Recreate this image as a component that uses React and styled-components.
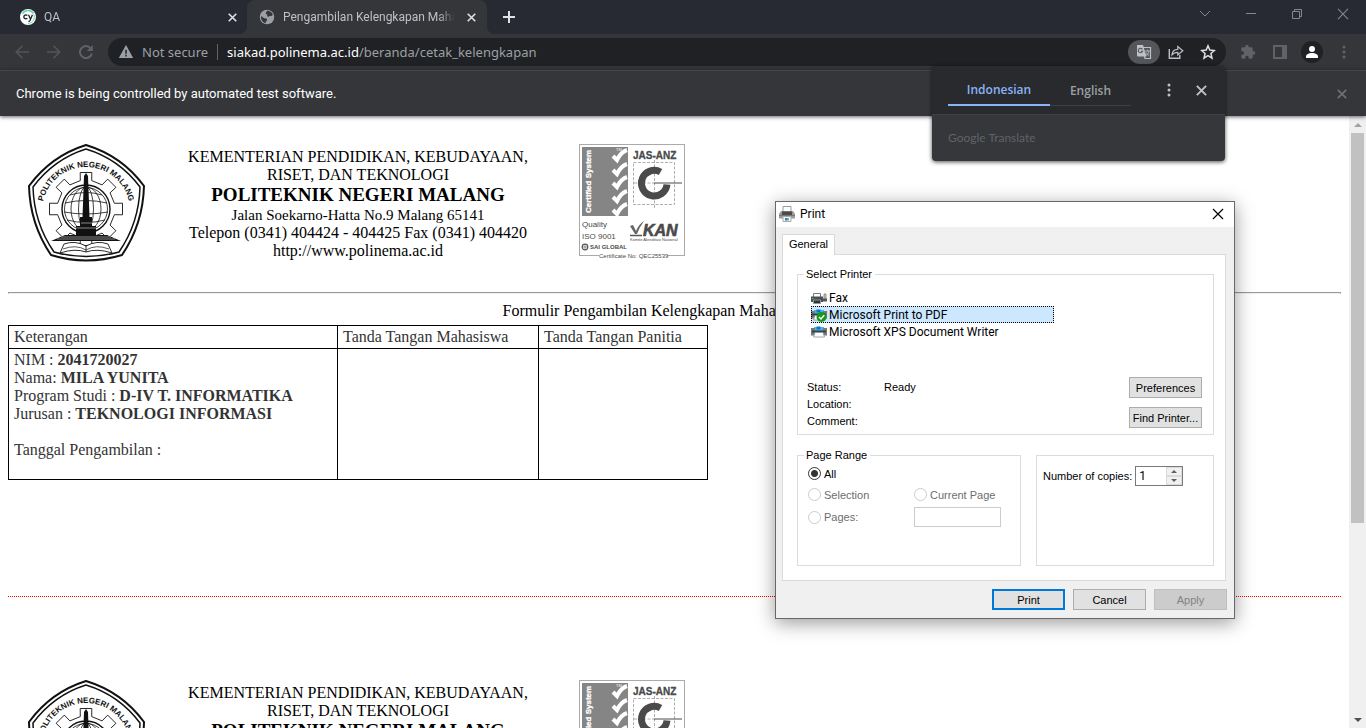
import React from "react";
import styled, { createGlobalStyle, css } from "styled-components";

const UI = `"Open Sans", "Noto Sans", sans-serif`;
const NARROW = `Roboto, "Liberation Sans", sans-serif`;
const DLG = `"Liberation Sans", Arial, sans-serif`;
const SERIF = `"Liberation Serif", "Times New Roman", serif`;

const GlobalStyle = createGlobalStyle`
  *, *::before, *::after { box-sizing: border-box; }
  body { margin: 0; background: #fff; }
  button, input { font: inherit; color: inherit; margin: 0; }
`;

const Screen = styled.div`
  position: relative;
  display: flex;
  flex-direction: column;
  height: 100vh;
  overflow: hidden;
`;

const IconButton = styled.button`
  display: flex;
  align-items: center;
  justify-content: center;
  width: ${(p) => p.$w || 32}px;
  height: ${(p) => p.$h || 24}px;
  flex: none;
  padding: 0;
  border: 0;
  border-radius: 12px;
  background: ${(p) => p.$bg || "transparent"};
  color: ${(p) => p.$color || "#dee1e6"};
`;

/* ---------- tab strip ---------- */

const TabStrip = styled.header`
  display: flex;
  height: 34px;
  flex: none;
  background: #282a33;
  font: 12px/16px ${NARROW};
  color: #bdc1c6;
`;

const Tab = styled.div`
  position: relative;
  display: flex;
  align-items: center;
  gap: 8px;
  width: ${(p) => (p.$active ? 240 : 247)}px;
  padding: 0 8px 0 ${(p) => (p.$active ? 12 : 20)}px;
  background: ${(p) => (p.$active ? "#35363a" : "transparent")};
  border-radius: 8px 8px 0 0;
  ${(p) =>
    p.$active &&
    css`
      &::before,
      &::after {
        content: "";
        position: absolute;
        bottom: 0;
        width: 8px;
        height: 8px;
      }
      &::before {
        left: -8px;
        background: radial-gradient(circle at 0 0, transparent 8px, #35363a 8px);
      }
      &::after {
        right: -8px;
        background: radial-gradient(circle at 100% 0, transparent 8px, #35363a 8px);
      }
    `}
`;

const TabTitle = styled.span`
  flex: 1;
  overflow: hidden;
  white-space: nowrap;
  mask-image: linear-gradient(to right, #000 90%, transparent);
`;

const NewTab = styled(IconButton)`
  align-self: center;
  margin-left: 8px;
`;

const WindowControls = styled.div`
  display: flex;
  margin-left: auto;
  height: 28px;
`;

/* ---------- toolbar ---------- */

const Toolbar = styled.div`
  display: flex;
  align-items: center;
  height: 36px;
  flex: none;
  padding: 0 6px;
  background: #35363a;
`;

const Omnibox = styled.div`
  display: flex;
  flex: 1;
  align-items: center;
  height: 28px;
  margin: 0 6px;
  padding: 0 2px 0 10px;
  border-radius: 14px;
  background: #202124;
  color: #9aa0a6;
  font: 13px/18px "Noto Sans", sans-serif;
`;

const Security = styled.span`
  margin: 0 9px 0 8px;
  white-space: nowrap;
`;

const Address = styled.span`
  flex: 1;
  padding-left: 9px;
  line-height: 16px;
  border-left: 1px solid #5f6368;
  white-space: nowrap;
  b {
    font-weight: 400;
    color: #fff;
  }
`;

const Infobar = styled.div`
  position: relative;
  z-index: 1;
  display: flex;
  align-items: center;
  justify-content: space-between;
  height: 46px;
  flex: none;
  padding: 0 8px 0 16px;
  border-top: 1px solid #45464a;
  background: #35363a;
  color: #fff;
  font: 13px/18px ${NARROW};
  box-shadow: 0 1px 4px rgba(0, 0, 0, 0.6);
`;

/* ---------- translate bubble ---------- */

const Bubble = styled.section`
  position: absolute;
  z-index: 2;
  top: 66px;
  right: 141px;
  width: 293px;
  border-radius: 4px;
  overflow: hidden;
  background: #36373a;
  font: 12px/16px ${UI};
  box-shadow: 0 1px 4px rgba(0, 0, 0, 0.7);
`;

const BubbleTop = styled.div`
  display: flex;
  align-items: center;
  height: 49px;
  padding-left: 16px;
  background: #292a2d;
  border-bottom: 1px solid #3f4145;
`;

const LangTab = styled.button`
  width: ${(p) => p.$w}px;
  height: 32px;
  padding: 2px 0 0;
  border: 0;
  border-bottom: ${(p) => (p.$on ? "2px solid #8ab4f8" : "1px solid #3c4043")};
  background: none;
  color: ${(p) => (p.$on ? "#8ab4f8" : "#9aa0a6")};
  font-weight: 600;
  font-size: 12px;
`;

const BubbleTools = styled.div`
  display: flex;
  margin-left: 22px;
`;

const BubbleBody = styled.div`
  padding: 15px 16px;
  color: #5f6368;
  font: 12px/16px Lato, sans-serif;
`;

/* ---------- page ---------- */

const Viewport = styled.div`
  display: flex;
  flex: 1;
  min-height: 0;
`;

const Page = styled.main`
  flex: 1;
  min-width: 0;
  overflow: hidden;
  padding: 8px;
  font: 16px/18px ${SERIF};
  color: #000;
`;

const Letterhead = styled.div`
  display: flex;
  align-items: center;
  height: 160px;
  padding-left: 18px;
`;

const Institution = styled.div`
  width: 354px;
  margin: 0 44px 0 35px;
  text-align: center;
`;

const Street = styled.div`
  font-size: 15px;
`;

const SchoolName = styled.h1`
  margin: 0;
  font-size: 19px;
  line-height: 22px;
`;

const Rule = styled.hr`
  height: 2px;
  margin: 8px 0;
  border: 1px solid #9a9a9a;
  border-bottom-color: #eee;
`;

const FormTitle = styled.p`
  margin: 0 0 5px;
  text-align: center;
`;

const FormTable = styled.table`
  width: 700px;
  table-layout: fixed;
  border-collapse: collapse;
  color: #333;
  th,
  td {
    padding: 2px 5px;
    border: 1px solid #000;
    text-align: left;
    vertical-align: top;
    font-weight: 400;
  }
`;

const Blank = styled.div`
  height: 18px;
`;

const CutLine = styled.div`
  margin: 116px 0 63px;
  border-top: 1px dotted #f00;
`;

const ScrollTrack = styled.div`
  display: flex;
  flex-direction: column;
  align-items: center;
  width: 17px;
  flex: none;
  background: #f0f0f0;
`;

const ScrollArrow = styled.button`
  display: flex;
  align-items: center;
  justify-content: center;
  width: 17px;
  height: 17px;
  padding: 0;
  border: 0;
  background: none;
  color: ${(p) => p.$color};
`;

const ScrollRun = styled.div`
  flex: 1;
  width: 13px;
`;

const ScrollThumb = styled.div`
  height: 67.5%;
  background: #c1c1c1;
`;

/* ---------- print dialog ---------- */

const Dialog = styled.section`
  position: absolute;
  z-index: 3;
  top: 201px;
  right: 131px;
  width: 460px;
  border: 1px solid #66686a;
  background: #f0f0f0;
  color: #000;
  font: 11px/14px ${DLG};
  box-shadow: 0 4px 18px rgba(0, 0, 0, 0.4);
`;

const TitleBar = styled.div`
  display: flex;
  align-items: center;
  gap: 5px;
  height: 25px;
  padding: 0 0 2px 3px;
  background: #fff;
  font: 12px/16px ${NARROW};
  button {
    margin-left: auto;
  }
`;

const DialogBody = styled.div`
  padding: 7px 7px 8px 6px;
`;

const DialogTab = styled.button`
  position: relative;
  display: block;
  height: 21px;
  width: 53px;
  padding: 0 0 2px;
  margin-bottom: -1px;
  border: 1px solid #d9d9d9;
  border-bottom: 0;
  background: #fff;
`;

const Panel = styled.div`
  margin-right: 1px;
  padding: 12px 11px 14px 14px;
  border: 1px solid #dadada;
  background: #fff;
`;

const Group = styled.fieldset`
  min-width: 0;
  margin: 0;
  padding: ${(p) => p.$top || 0}px 11px 6px 6px;
  border: 1px solid #dcdcdc;
  height: ${(p) => p.$h}px;
  legend {
    padding: 0 3px 0 2px;
  }
`;

const Printers = styled.ul`
  width: 243px;
  margin: 8px 0 37px 7px;
  padding: 0;
  list-style: none;
  font: 12px/15px ${NARROW};
`;

const Printer = styled.li`
  display: flex;
  align-items: center;
  gap: 2px;
  height: 17px;
  padding-top: 2px;
  background: ${(p) => (p.$on ? "#cce8ff" : "none")};
  outline: ${(p) => (p.$on ? "1px dotted #000" : "none")};
  outline-offset: -1px;
`;

const StatusRow = styled.div`
  display: flex;
  justify-content: space-between;
`;

const Status = styled.dl`
  display: grid;
  grid-template-columns: 77px auto;
  grid-auto-rows: 17px;
  align-items: center;
  margin: 1px 0 0 3px;
  dd {
    margin: 0;
  }
`;

const Stack = styled.div`
  display: flex;
  flex-direction: column;
  gap: 9px;
`;

const PushButton = styled.button`
  width: 73px;
  height: 21px;
  padding: 0;
  border: ${(p) => (p.$primary ? "2px solid #0078d7" : "1px solid #adadad")};
  background: #e1e1e1;
  white-space: nowrap;
  &:disabled {
    border-color: #bfbfbf;
    background: #ccc;
    color: #838383;
  }
`;

const Groups = styled.div`
  display: grid;
  grid-template-columns: 224px 1fr;
  gap: 15px;
  align-items: end;
  margin-top: 13px;
`;

const RangeGrid = styled.div`
  display: grid;
  grid-template-columns: 106px 87px;
  grid-template-rows: 21px 21px 24px;
  align-items: center;
  margin: 1px 0 0 4px;
`;

const RadioLabel = styled.label`
  display: flex;
  align-items: center;
  gap: 3px;
  grid-column: ${(p) => p.$col || 1};
  color: ${(p) => (p.$off ? "#6d6d6d" : "#000")};
`;

const Radio = styled.input`
  appearance: none;
  width: 13px;
  height: 13px;
  border: 1px solid #333;
  border-radius: 50%;
  background: #fff;
  &:checked {
    background: radial-gradient(circle, #333 0 3px, #fff 4px);
  }
  &:disabled {
    border-color: #ccc;
  }
`;

const PagesInput = styled.input`
  width: 87px;
  height: 20px;
  border: 1px solid #ccc;
  background: #fff;
`;

const Copies = styled.div`
  display: flex;
  align-items: center;
  gap: 3px;
  white-space: nowrap;
`;

const Spinner = styled.div`
  display: flex;
  width: 48px;
  height: 20px;
  border: 1px solid #7a7a7a;
  input {
    width: 30px;
    padding: 0 3px;
    border: 0;
    outline: 0;
    font: 12px/16px ${NARROW};
  }
`;

const SpinButtons = styled.div`
  display: grid;
  flex: 1;
  background: #f0f0f0;
  button {
    display: flex;
    align-items: center;
    justify-content: center;
    padding: 0;
    border: 1px solid #dadada;
    background: none;
    color: #606060;
  }
`;

const Footer = styled.div`
  display: flex;
  justify-content: flex-end;
  gap: 8px;
  margin-top: 8px;
`;

/* ---------- icons ---------- */

const Cross = ({ size = 10, w = 1.8 }) => (
  <svg width={size} height={size} viewBox="0 0 10 10" stroke="currentColor" strokeWidth={w}>
    <path d="M.8 .8l8.400 8.400M9.200 .8l-8.400 8.400" />
  </svg>
);

const Dots = () => (
  <svg width="4" height="14" viewBox="0 0 4 14" fill="currentColor">
    <circle cx="2" cy="2" r="1.5" />
    <circle cx="2" cy="7" r="1.5" />
    <circle cx="2" cy="12" r="1.5" />
  </svg>
);

const Arrow = ({ back }) => (
  <svg width="14" height="14" viewBox="0 0 14 14" fill="none" stroke="currentColor" strokeWidth="1.6">
    <path d={back ? "M14 7H1.5M7.5 .8L1.3 7l6.2 6.2" : "M0 7h12.5M6.500 .8L12.700 7l-6.200 6.200"} />
  </svg>
);

const Reload = () => (
  <svg width="14" height="14" viewBox="0 0 14 14" fill="none" stroke="currentColor" strokeWidth="2">
    <path d="M11.700 3.400A6 6 0 1 0 12.800 8.500" />
    <path d="M13.800 0v6H7.800z" fill="currentColor" stroke="none" />
  </svg>
);

const Warning = () => (
  <svg width="16" height="16" viewBox="0 0 16 16">
    <path d="M8 1l7.200 13H.8z" fill="#9aa0a6" />
    <path d="M8 5.800v4M8 10.800v1.700" stroke="#202124" strokeWidth="1.500" />
  </svg>
);

const CypressIcon = () => (
  <svg width="16" height="16" viewBox="0 0 16 16">
    <circle cx="8" cy="8" r="8" fill="#fff" />
    <path d="M2.500 4.500A6.500 6.500 0 0 1 13.500 4.500" fill="none" stroke="#69d3a7" strokeWidth="1.500" />
    <path d="M13.800 5.500A6.500 6.500 0 0 1 8 14.500" fill="none" stroke="#69d3a7" strokeWidth="1" />
    <path d="M7.300 6.500A2 2 0 1 0 7.300 9.300" fill="none" stroke="#1b1e2e" strokeWidth="1.300" />
    <path d="M8.500 5.800l1.800 4M12.400 5.800L10 11.500q-.5 1-1.500.8" fill="none" stroke="#1b1e2e" strokeWidth="1.300" />
  </svg>
);

const Globe = () => (
  <svg width="16" height="16" viewBox="0 0 15 15">
    <circle cx="7.500" cy="7.500" r="6.800" fill="#9aa0a6" />
    <path d="M7.800 1.500c2 .2 4.300 1.500 5.200 4l-1.500 1.300-1-.5-1.500 1-1.500-.6.300-1.700L6.200 4.700l.3-1.200zM1.900 6.500l3 2.200 2.200.3.600 1.600-1.400 1.200.2 1.400C4 13 1.600 10.500 1.900 6.500z" fill="#35363a" />
  </svg>
);

const Translate = () => (
  <svg width="16" height="16" viewBox="0 0 16 16">
    <path d="M6.500 3.500h8v11H9z" fill="none" stroke="#bdc1c6" strokeWidth="1.200" />
    <path d="M1 1h6l3.500 11.500H2a1 1 0 0 1-1-1z" fill="#bdc1c6" />
    <path d="M6.400 5.400A2.200 2.200 0 1 0 6.600 7.200H4.900" fill="none" stroke="#55565a" strokeWidth="1.100" />
    <path d="M9.200 7h4.500M11.500 5.800V7M13 7c-.4 2-1.500 3.500-3 4.500M10.200 8.500q1 2 3 3" fill="none" stroke="#bdc1c6" strokeWidth=".9" />
  </svg>
);

const Share = () => (
  <svg width="16" height="16" viewBox="0 0 16 16" fill="none" stroke="currentColor" strokeWidth="1.400">
    <path d="M1.300 5v9.300h10.500V11" />
    <path d="M4 10.800c.3-3.600 2.500-5.400 5.800-5.500V2.600l5 4.200-5 4.200V8.300C7.200 8.300 5.400 9 4 10.800z" strokeWidth="1.200" />
  </svg>
);

const Star = () => (
  <svg width="16" height="16" viewBox="0 0 16 16" fill="none" stroke="currentColor" strokeWidth="1.500">
    <path d="M8 1.800l1.800 4.300 4.600.4-3.500 3 1.100 4.600L8 11.700l-4 2.400 1.100-4.600-3.500-3 4.600-.4z" />
  </svg>
);

const Puzzle = () => (
  <svg width="16" height="16" viewBox="0 0 24 24" fill="currentColor">
    <path d="M20.500 11H19V7a2 2 0 0 0-2-2h-4V3.500a2.500 2.500 0 0 0-5 0V5H4a2 2 0 0 0-2 2v3.800h1.500a2.700 2.700 0 0 1 0 5.400H2V20a2 2 0 0 0 2 2h3.800v-1.500a2.700 2.700 0 0 1 5.400 0V22H17a2 2 0 0 0 2-2v-4h1.500a2.500 2.500 0 0 0 0-5z" />
  </svg>
);

const SidePanel = () => (
  <svg width="14" height="14" viewBox="0 0 14 14" fill="currentColor">
    <path fillRule="evenodd" d="M0 0h14v14H0zM2 2v10h7V2z" />
  </svg>
);

const Avatar = () => (
  <svg width="22" height="22" viewBox="0 0 22 22">
    <circle cx="11" cy="11" r="11" fill="#202124" />
    <circle cx="11" cy="8" r="3" fill="#fff" />
    <path d="M5 17v-1.500c0-2.300 3-3.500 6-3.500s6 1.200 6 3.500V17z" fill="#fff" />
  </svg>
);

const Triangle = ({ down, w = 8 }) => (
  <svg width={w} height={w / 2} viewBox="0 0 8 4" fill="currentColor">
    <path d={down ? "M0 0h8L4 4z" : "M0 4h8L4 0z"} />
  </svg>
);

const PrinterLarge = () => (
  <svg width="16" height="16" viewBox="0 0 16 16">
    <path d="M4 .5h8v6H4z" fill="#fff" stroke="#999" />
    <path d="M2 5h12l2 3v4.500H0V8z" fill="#9a9a9a" />
    <path d="M3 5.500h10v4H3z" fill="#4b4b4b" />
    <path d="M0 9.500h16" stroke="#777" />
    <path d="M4 10.500h8v5H4z" fill="#f4f8fb" stroke="#aaa" />
    <path d="M6 12h2v2.500H6z" fill="#3a77c4" />
    <path d="M8 12h2v2.500H8z" fill="#62b5a5" />
  </svg>
);

const FaxIcon = () => (
  <svg width="16" height="12" viewBox="0 0 16 12">
    <path d="M2.500 .5h7v4h-7z" fill="#fff" stroke="#777" />
    <path d="M0 3.500h12v5.500H0z" fill="#4a4f52" />
    <path d="M1 5h1.500v1H1z" fill="#4fd06a" />
    <path d="M2.500 7h7v3.500h-7z" fill="#30363a" stroke="#8f9699" />
    <path d="M13 1h2v5.500h-2z" fill="#c8ccce" stroke="#777" strokeWidth=".8" />
    <path d="M11.500 5.500h4.500v3h-4.500z" fill="#555" />
  </svg>
);

const PrinterSmall = ({ checked }) => (
  <svg width="16" height="15" viewBox="0 0 16 15">
    <path d="M3 2h10v4H3z" fill="#46b6ee" />
    <path d="M5.500 1.500h4v3h-4z" fill="#1673c8" />
    <path d="M0 3h4v3h8V3h4v7.500H0z" fill="#757b7f" />
    <path d="M1 5.500h14v2H1z" fill="#3a4043" />
    <path d="M4 7.500h8l1.500 4.500h-11z" fill="#fff" stroke="#8c9295" strokeWidth=".8" />
    {checked && (
      <g>
        <circle cx="10.500" cy="9" r="5" fill="#129a1c" />
        <path d="M8 9l2 2 3.200-3.800" fill="none" stroke="#fff" strokeWidth="1.500" />
      </g>
    )}
  </svg>
);

function gearPath(cx, cy, outer, inner, teeth) {
  const step = (Math.PI * 2) / teeth;
  const at = (r, a) => `${(cx + r * Math.sin(a)).toFixed(1)} ${(cy - r * Math.cos(a)).toFixed(1)}`;
  const points = [];
  for (let i = 0; i < teeth; i += 1) {
    const a = i * step;
    points.push(
      at(inner, a - step * 0.25),
      at(outer, a - step * 0.2),
      at(outer, a + step * 0.2),
      at(inner, a + step * 0.25)
    );
  }
  return `M${points.join("L")}Z`;
}

const GEAR = gearPath(59, 66, 37, 29, 8);

const SchoolSeal = ({ id }) => (
  <svg width="120" height="120" viewBox="-1 1 120 120" fill="none" stroke="#111" aria-label="Politeknik Negeri Malang">
    <path d="M59 2Q95 13 117 43Q116 81 95 112Q59 123 24 112Q3 81 2 43Q24 13 59 2Z" strokeWidth="2" />
    <path d="M59 6Q92 16 113 44Q112 80 92 109Q59 118 27 109Q7 80 6 44Q27 16 59 6Z" strokeWidth="1.500" />
    <path d={GEAR} fill="#fff" strokeWidth=".9" />
    <path id={id} d="M15 68A44 44 0 0 1 103 68" stroke="none" />
    <text fill="#111" stroke="none" fontFamily="Liberation Sans, sans-serif" fontSize="8" fontWeight="700" textAnchor="middle">
      <textPath href={`#${id}`} startOffset="50%">POLITEKNIK NEGERI MALANG</textPath>
    </text>
    <circle cx="59" cy="66" r="24" fill="#fff" strokeWidth="1.400" />
    <circle cx="59" cy="66" r="21.500" strokeWidth=".8" />
    <g strokeWidth=".8">
      <ellipse cx="59" cy="66" rx="7.500" ry="22" />
      <ellipse cx="59" cy="66" rx="15" ry="22" />
      <path d="M43 52q16-5 32 0M38 60q21-5 42 0M37 69q22 4 44 0M40 77q19 5 38 0" />
    </g>
    <path d="M24 98L38 92H49V83H53V74H55.500L57 33L59 30L61 33L62.500 74H65V83H69V92H80L94 98Z" fill="#111" stroke="none" />
    <path d="M34 94h50M30 96h58M54 80h11M49 85h20" stroke="#fff" strokeWidth=".5" />
    <path d="M59 103Q48 97 37 101L33 110Q48 105 59 109Q70 105 85 110L81 101Q70 97 59 103V109" fill="#fff" strokeWidth=".9" />
    <path d="M36 106q13-5 23 1q10-6 23-1" strokeWidth=".7" />
  </svg>
);

const CertBadge = () => (
  <svg width="107" height="120" viewBox="1 3 107 120" fontFamily="Liberation Sans, sans-serif" fill="#4a4a4a">
    <rect x="1.500" y="3.500" width="105" height="111" fill="#fff" stroke="#aaa" />
    <rect x="4" y="6" width="46" height="69" fill="#858585" />
    <text x="-72" y="13" transform="rotate(-90)" fontSize="8" fontWeight="700" fill="#fff" stroke="#fff" strokeWidth=".3">Certified System</text>
    <g fill="none" stroke="#fff" strokeWidth="4">
      {[15, 29, 42, 56, 69].map((y) => (
        <path key={y} d={`M35 ${y}l4 4q4-8 10-10`} />
      ))}
    </g>
    <text x="38" y="10" fontSize="4" fill="#fff">TM</text>
    <text x="55" y="18" fontSize="10" fontWeight="700" stroke="#4a4a4a" strokeWidth=".3">JAS-ANZ</text>
    <path d="M55.500 21.500h41v42h-41zM76.500 19v48M56 42h20" fill="none" stroke="#999" strokeWidth=".8" strokeDasharray="3 1.500" />
    <path d="M82.500 31A12.800 12.800 0 1 0 89 43.500" fill="none" stroke="#4a4a4a" strokeWidth="7" />
    <path d="M76 42h28" stroke="#4a4a4a" />
    <text x="4" y="86" fontSize="8">Quality</text>
    <text x="4" y="98" fontSize="8">ISO 9001</text>
    <circle cx="7" cy="106" r="2.800" fill="none" stroke="#555" strokeWidth="1.200" />
    <path d="M4.500 106h5M7 103.500v5" stroke="#555" strokeWidth=".6" />
    <text x="12" y="108" fontSize="6" fontWeight="700">SAI GLOBAL</text>
    <path d="M52 85l3-1 3 6q3-7 8-10-5 7-7 13h-2z" fill="#666" />
    <path d="M52 94.500h12" stroke="#555" strokeWidth="1.500" />
    <text x="65" y="95" fontSize="16" fontWeight="700" fontStyle="italic" stroke="#4a4a4a" strokeWidth=".6">KAN</text>
    <text x="52" y="100" fontSize="4">Komite Akreditasi Nasional</text>
    <rect x="21" y="111" width="68" height="7" fill="#fff" />
    <text x="21" y="117" fontSize="6">Certificate No: QEC25539</text>
  </svg>
);

/* ---------- sections ---------- */

function Head({ id }) {
  return (
    <Letterhead>
      <SchoolSeal id={id} />
      <Institution>
        <div>KEMENTERIAN PENDIDIKAN, KEBUDAYAAN,</div>
        <div>RISET, DAN TEKNOLOGI</div>
        <SchoolName>POLITEKNIK NEGERI MALANG</SchoolName>
        <Street>Jalan Soekarno-Hatta No.9 Malang 65141</Street>
        <div>Telepon (0341) 404424 - 404425 Fax (0341) 404420</div>
        <div>http://www.polinema.ac.id</div>
      </Institution>
      <CertBadge />
    </Letterhead>
  );
}

function PrintDialog() {
  return (
    <Dialog role="dialog" aria-label="Print">
      <TitleBar>
        <PrinterLarge />
        Print
        <IconButton $w={32} $color="#000" aria-label="Close dialog"><Cross size={12} w={1} /></IconButton>
      </TitleBar>
      <DialogBody>
        <DialogTab>General</DialogTab>
        <Panel>
          <Group $h={168}>
            <legend>Select Printer</legend>
            <Printers role="listbox" aria-label="Printers">
              <Printer role="option"><FaxIcon />Fax</Printer>
              <Printer role="option" aria-selected="true" $on><PrinterSmall checked />Microsoft Print to PDF</Printer>
              <Printer role="option"><PrinterSmall />Microsoft XPS Document Writer</Printer>
            </Printers>
            <StatusRow>
              <Status>
                <dt>Status:</dt><dd>Ready</dd>
                <dt>Location:</dt><dd />
                <dt>Comment:</dt><dd />
              </Status>
              <Stack>
                <PushButton>Preferences</PushButton>
                <PushButton>Find Printer...</PushButton>
              </Stack>
            </StatusRow>
          </Group>
          <Groups>
            <Group $h={118}>
              <legend>Page Range</legend>
              <RangeGrid>
                <RadioLabel><Radio type="radio" name="range" defaultChecked />All</RadioLabel>
                <RadioLabel $off><Radio type="radio" name="range" disabled />Selection</RadioLabel>
                <RadioLabel $off $col={2}><Radio type="radio" name="range" disabled />Current Page</RadioLabel>
                <RadioLabel $off><Radio type="radio" name="range" disabled />Pages:</RadioLabel>
                <PagesInput type="text" aria-label="Pages" disabled />
              </RangeGrid>
            </Group>
            <Group $h={111} $top={10}>
              <Copies>
                <label htmlFor="copies">Number of copies:</label>
                <Spinner>
                  <input id="copies" type="text" defaultValue="1" />
                  <SpinButtons>
                    <button aria-label="More copies"><Triangle w={6} /></button>
                    <button aria-label="Fewer copies"><Triangle down w={6} /></button>
                  </SpinButtons>
                </Spinner>
              </Copies>
            </Group>
          </Groups>
        </Panel>
        <Footer>
          <PushButton $primary>Print</PushButton>
          <PushButton>Cancel</PushButton>
          <PushButton disabled>Apply</PushButton>
        </Footer>
      </DialogBody>
    </Dialog>
  );
}

export default function App() {
  return (
    <Screen>
      <GlobalStyle />
      <TabStrip>
        <Tab>
          <CypressIcon />
          <TabTitle>QA</TabTitle>
          <IconButton $w={14} aria-label="Close tab"><Cross size={9} /></IconButton>
        </Tab>
        <Tab $active>
          <Globe />
          <TabTitle>Pengambilan Kelengkapan Mahasiswa</TabTitle>
          <IconButton $w={16} aria-label="Close tab"><Cross size={9} /></IconButton>
        </Tab>
        <NewTab $w={28} aria-label="New tab">
          <svg width="12" height="12" stroke="currentColor" strokeWidth="2"><path d="M6 0v12M0 6h12" /></svg>
        </NewTab>
        <WindowControls>
          <IconButton $w={46} $h={28} $color="#85878d" aria-label="Search tabs">
            <svg width="12" height="8" fill="none" stroke="currentColor"><path d="M1 1l5 5 5-5" /></svg>
          </IconButton>
          <IconButton $w={46} $h={28} $color="#85878d" aria-label="Minimize">
            <svg width="10" height="2" fill="currentColor"><path d="M0 0h10v1H0z" /></svg>
          </IconButton>
          <IconButton $w={46} $h={28} $color="#85878d" aria-label="Restore">
            <svg width="10" height="10" fill="none" stroke="currentColor"><path d="M.5 2.500h7v7h-7zM2.500 2.500v-2h7v7h-2" /></svg>
          </IconButton>
          <IconButton $w={46} $h={28} $color="#85878d" aria-label="Close window"><Cross size={12} w={0.9} /></IconButton>
        </WindowControls>
      </TabStrip>
      <Toolbar>
        <IconButton $color="#53555a" aria-label="Back"><Arrow back /></IconButton>
        <IconButton $color="#53555a" aria-label="Forward"><Arrow /></IconButton>
        <IconButton $color="#5f6368" aria-label="Reload"><Reload /></IconButton>
        <Omnibox>
          <Warning />
          <Security>Not secure</Security>
          <Address><b>siakad.polinema.ac.id</b>/beranda/cetak_kelengkapan</Address>
          <IconButton $bg="#55565a" aria-label="Translate this page"><Translate /></IconButton>
          <IconButton $color="#bdc1c6" aria-label="Share"><Share /></IconButton>
          <IconButton $color="#dee1e6" aria-label="Bookmark"><Star /></IconButton>
        </Omnibox>
        <IconButton $color="#5f6368" aria-label="Extensions"><Puzzle /></IconButton>
        <IconButton $color="#5f6368" aria-label="Side panel"><SidePanel /></IconButton>
        <IconButton aria-label="Profile"><Avatar /></IconButton>
        <IconButton $color="#5f6368" aria-label="Menu"><Dots /></IconButton>
      </Toolbar>
      <Infobar>
        Chrome is being controlled by automated test software.
        <IconButton $color="#6b6e72" aria-label="Close infobar"><Cross /></IconButton>
      </Infobar>
      <Viewport>
        <Page>
          <Head id="seal-arc-top" />
          <Rule />
          <FormTitle>Formulir Pengambilan Kelengkapan Mahasiswa Baru</FormTitle>
          <FormTable>
            <colgroup>
              <col width="329" />
              <col width="201" />
              <col />
            </colgroup>
            <thead>
              <tr>
                <th scope="col">Keterangan</th>
                <th scope="col">Tanda Tangan Mahasiswa</th>
                <th scope="col">Tanda Tangan Panitia</th>
              </tr>
            </thead>
            <tbody>
              <tr>
                <td>
                  <div>NIM : <b>2041720027</b></div>
                  <div>Nama: <b>MILA YUNITA</b></div>
                  <div>Program Studi : <b>D-IV T. INFORMATIKA</b></div>
                  <div>Jurusan : <b>TEKNOLOGI INFORMASI</b></div>
                  <Blank />
                  <div>Tanggal Pengambilan :</div>
                  <Blank />
                </td>
                <td />
                <td />
              </tr>
            </tbody>
          </FormTable>
          <CutLine />
          <Head id="seal-arc-bottom" />
        </Page>
        <ScrollTrack>
          <ScrollArrow $color="#a3a3a3" aria-label="Scroll up"><Triangle /></ScrollArrow>
          <ScrollRun><ScrollThumb /></ScrollRun>
          <ScrollArrow $color="#505050" aria-label="Scroll down"><Triangle down /></ScrollArrow>
        </ScrollTrack>
      </Viewport>
      <Bubble aria-label="Translate">
        <BubbleTop>
          <LangTab $w={102} $on>Indonesian</LangTab>
          <LangTab $w={81}>English</LangTab>
          <BubbleTools>
            <IconButton $color="#bdc1c6" aria-label="Translate options"><Dots /></IconButton>
            <IconButton $color="#bdc1c6" aria-label="Close translate"><Cross size={11} /></IconButton>
          </BubbleTools>
        </BubbleTop>
        <BubbleBody>Google Translate</BubbleBody>
      </Bubble>
      <PrintDialog />
    </Screen>
  );
}
